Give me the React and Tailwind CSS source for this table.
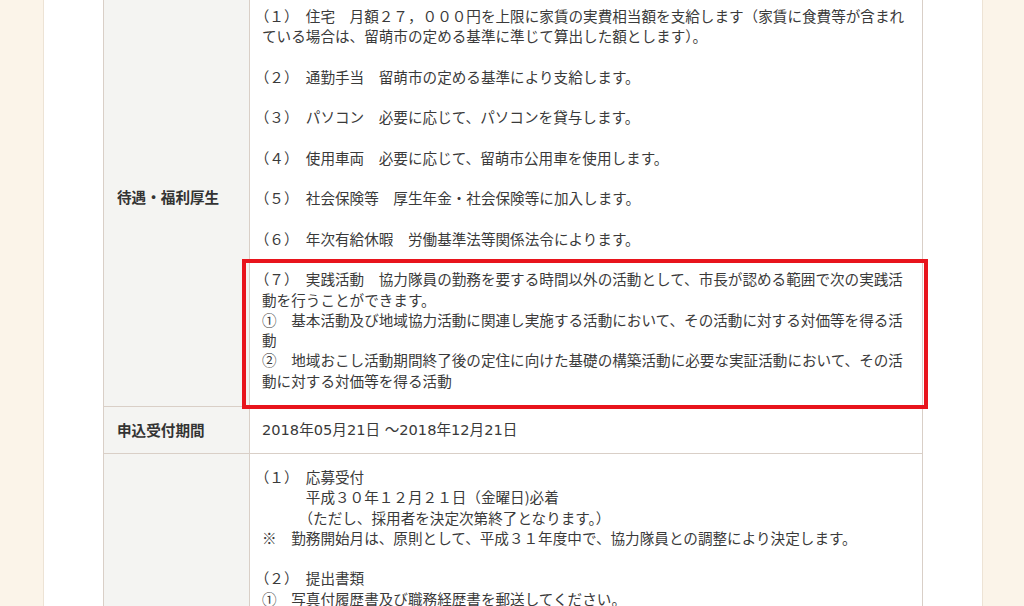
import React from "react";

const Num = ({ children }) => (
  <span className="[font-feature-settings:'halt']">{children}</span>
);

export default function App() {
  return (
    <div className="relative h-[606px] w-[1024px] overflow-hidden bg-[#fbf4e9] font-['Noto_Sans_CJK_JP','Noto_Sans_CJK_SC',sans-serif] text-[14.6px] leading-[20.25px] text-[#3a3a3a]">
      <div className="ml-[43px] flex w-[940px] flex-col border-x border-[#ede3d5] bg-white px-[59px] pb-[40px]">
        <div className="-mt-[12px] w-[820px] border-x border-[#d9cfc7]">
          {/* Row 1 */}
          <div className="flex border-b border-[#d9cfc7]">
            <div className="flex w-[146px] shrink-0 items-center border-r border-[#d9cfc7] bg-[#f4f4f2] px-[13px] font-bold text-[#333]">
              待遇・福利厚生
            </div>
            <div className="flex min-w-0 flex-1 flex-col gap-[20.25px] px-[12px] pb-[15px] pt-[18px]">
              <p>
                <Num>（１）</Num>　住宅　月額２７，０００円を上限に家賃の実費相当額を支給します（家賃に食費等が含まれている場合は、留萌市の定める基準に準じて算出した額とします）。
              </p>
              <p>
                <Num>（２）</Num>　通勤手当　留萌市の定める基準により支給します。
              </p>
              <p>
                <Num>（３）</Num>　パソコン　必要に応じて、パソコンを貸与します。
              </p>
              <p>
                <Num>（４）</Num>　使用車両　必要に応じて、留萌市公用車を使用します。
              </p>
              <p>
                <Num>（５）</Num>　社会保険等　厚生年金・社会保険等に加入します。
              </p>
              <p>
                <Num>（６）</Num>　年次有給休暇　労働基準法等関係法令によります。
              </p>
              <div>
                <p>
                  <Num>（７）</Num>　実践活動　協力隊員の勤務を要する時間以外の活動として、市長が認める範囲で次の実践活動を行うことができます。
                </p>
                <p>①　基本活動及び地域協力活動に関連し実施する活動において、その活動に対する対価等を得る活動</p>
                <p>②　地域おこし活動期間終了後の定住に向けた基礎の構築活動に必要な実証活動において、その活動に対する対価等を得る活動</p>
              </div>
            </div>
          </div>

          {/* Row 2 */}
          <div className="flex border-b border-[#d9cfc7]">
            <div className="flex w-[146px] shrink-0 items-center border-r border-[#d9cfc7] bg-[#f4f4f2] px-[13px] font-bold text-[#333]">
              申込受付期間
            </div>
            <div className="min-w-0 flex-1 px-[12px] py-[13px] font-['DejaVu_Sans','Noto_Sans_CJK_JP',sans-serif]">
              2018年05月21日 ～2018年12月21日
            </div>
          </div>

          {/* Row 3 */}
          <div className="flex border-b border-[#d9cfc7]">
            <div className="flex w-[146px] shrink-0 items-center border-r border-[#d9cfc7] bg-[#f4f4f2] px-[13px] font-bold text-[#333]">
              応募方法
            </div>
            <div className="flex min-w-0 flex-1 flex-col gap-[20.25px] px-[12px] py-[13px]">
              <div>
                <p>
                  <Num>（１）</Num>　応募受付
                </p>
                <p>　　　平成３０年１２月２１日（金曜日)必着</p>
                <p>　　　（ただし、採用者を決定次第終了となります。）</p>
                <p>※　勤務開始月は、原則として、平成３１年度中で、協力隊員との調整により決定します。</p>
              </div>
              <div>
                <p>
                  <Num>（２）</Num>　提出書類
                </p>
                <p>①　写真付履歴書及び職務経歴書を郵送してください。</p>
                <p>②　応募用紙に必要事項を記入の上、郵送してください。</p>
                <p>③　住民票の写し</p>
                <p>④　作文「留萌市で取り組みたいこと」（８００字程度）</p>
              </div>
              <div>
                <p>
                  <Num>（３）</Num>　選考方法
                </p>
                <p>　　　第一次選考　書類選考</p>
                <p>　　　第二次選考　面接選考（第一次選考合格者のみ）</p>
              </div>
              <div>
                <p>
                  <Num>（４）</Num>　提出先・問い合わせ先
                </p>
                <p>　　　留萌市役所　地域振興部　地域振興課</p>
                <p>　　　〒０７７－８６０１　北海道留萌市幸町１丁目１１番地</p>
              </div>
            </div>
          </div>
        </div>
      </div>

      {/* Red highlight annotation */}
      <div className="pointer-events-none absolute left-[242px] top-[259px] h-[150px] w-[686px] border-4 border-[#e8141c]" />
    </div>
  );
}
